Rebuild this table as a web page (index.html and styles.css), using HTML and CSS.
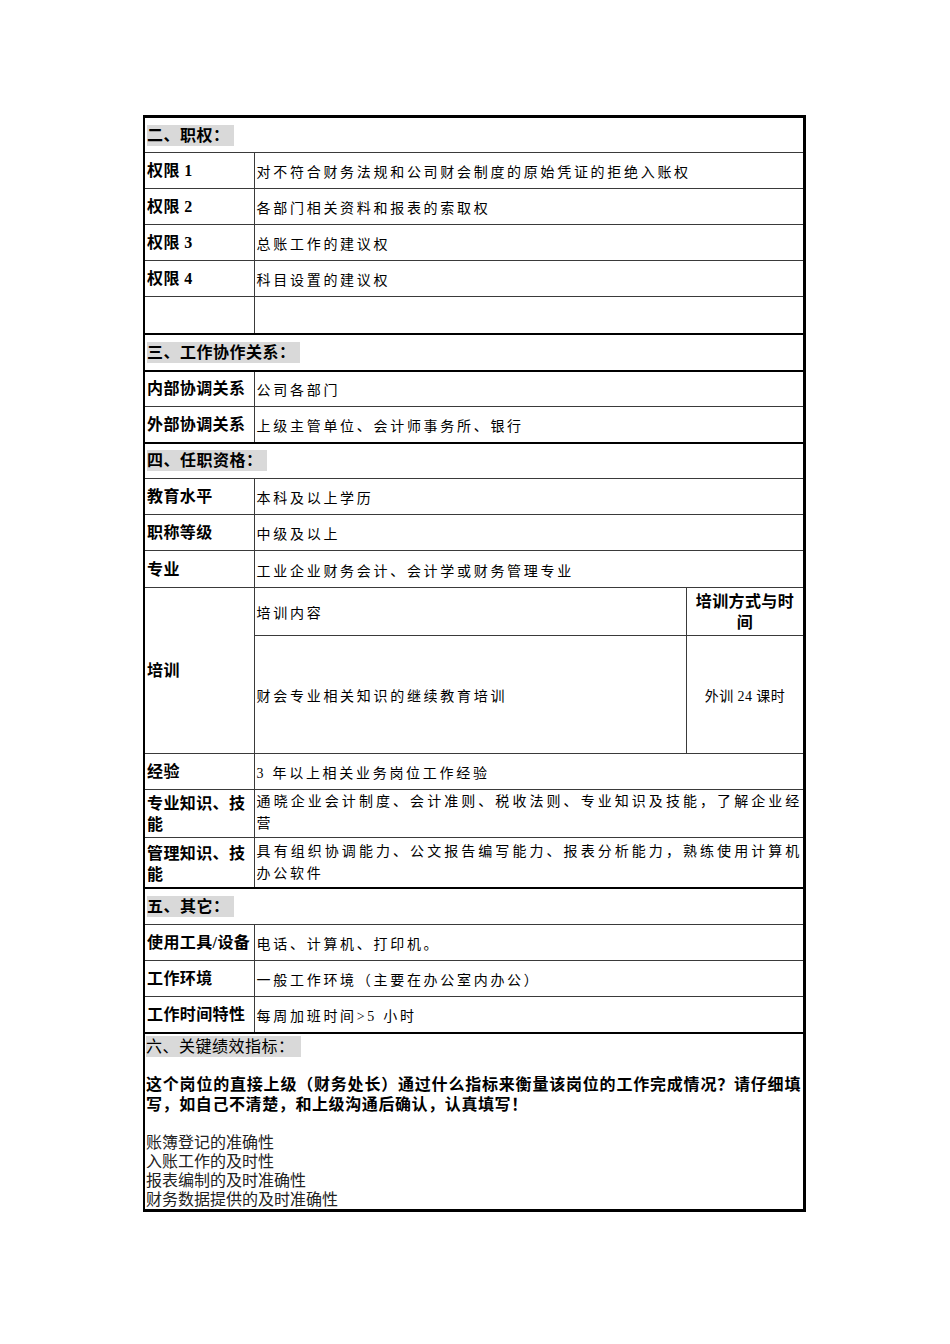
FILE: index.html
```html
<!DOCTYPE html>
<html lang="zh-CN">
<head>
<meta charset="utf-8">
<title>岗位说明书</title>
<link rel="stylesheet" href="styles.css">
</head>
<body>
<table class="sheet">
  <colgroup>
    <col class="c1">
    <col class="c2">
    <col class="c3">
  </colgroup>
  <tbody>
    <tr class="h36 sec"><td colspan="3" class="head"><span class="tag">二、职权：</span></td></tr>
    <tr class="h36"><td class="lab">权限 1</td><td colspan="2" class="val">对不符合财务法规和公司财会制度的原始凭证的拒绝入账权</td></tr>
    <tr class="h36"><td class="lab">权限 2</td><td colspan="2" class="val">各部门相关资料和报表的索取权</td></tr>
    <tr class="h36"><td class="lab">权限 3</td><td colspan="2" class="val">总账工作的建议权</td></tr>
    <tr class="h36"><td class="lab">权限 4</td><td colspan="2" class="val">科目设置的建议权</td></tr>
    <tr class="h37"><td class="lab"></td><td colspan="2" class="val"></td></tr>
    <tr class="h37 sec"><td colspan="3" class="head"><span class="tag">三、工作协作关系：</span></td></tr>
    <tr class="h36 sec"><td class="lab">内部协调关系</td><td colspan="2" class="val">公司各部门</td></tr>
    <tr class="h36"><td class="lab">外部协调关系</td><td colspan="2" class="val">上级主管单位、会计师事务所、银行</td></tr>
    <tr class="h36 sec"><td colspan="3" class="head"><span class="tag">四、任职资格：</span></td></tr>
    <tr class="h36"><td class="lab">教育水平</td><td colspan="2" class="val">本科及以上学历</td></tr>
    <tr class="h36"><td class="lab">职称等级</td><td colspan="2" class="val">中级及以上</td></tr>
    <tr class="h37"><td class="lab">专业</td><td colspan="2" class="val">工业企业财务会计、会计学或财务管理专业</td></tr>
    <tr class="h48"><td class="lab" rowspan="2">培训</td><td class="val">培训内容</td><td class="lab center">培训方式与时间</td></tr>
    <tr class="h118"><td class="val">财会专业相关知识的继续教育培训</td><td class="val center">外训 24 课时</td></tr>
    <tr class="h36"><td class="lab">经验</td><td colspan="2" class="val">3 年以上相关业务岗位工作经验</td></tr>
    <tr class="h48 two"><td class="lab">专业知识、技能</td><td colspan="2" class="val">通晓企业会计制度、会计准则、税收法则、专业知识及技能，了解企业经营</td></tr>
    <tr class="h50 two"><td class="lab">管理知识、技能</td><td colspan="2" class="val">具有组织协调能力、公文报告编写能力、报表分析能力，熟练使用计算机办公软件</td></tr>
    <tr class="h37 sec"><td colspan="3" class="head"><span class="tag">五、其它：</span></td></tr>
    <tr class="h36"><td class="lab">使用工具/设备</td><td colspan="2" class="val">电话、计算机、打印机。</td></tr>
    <tr class="h36"><td class="lab">工作环境</td><td colspan="2" class="val">一般工作环境（主要在办公室内办公）</td></tr>
    <tr class="h36"><td class="lab">工作时间特性</td><td colspan="2" class="val">每周加班时间&gt;5 小时</td></tr>
    <tr class="h176 sec last">
      <td colspan="3" class="kpi">
        <div class="kpi-head"><span class="tag light">六、关键绩效指标：</span></div>
        <p class="kpi-q">这个岗位的直接上级（财务处长）通过什么指标来衡量该岗位的工作完成情况？请仔细填写，如自己不清楚，和上级沟通后确认，认真填写！</p>
        <ul class="kpi-list">
          <li>账簿登记的准确性</li>
          <li>入账工作的及时性</li>
          <li>报表编制的及时准确性</li>
          <li>财务数据提供的及时准确性</li>
        </ul>
      </td>
    </tr>
  </tbody>
</table>
</body>
</html>
```

FILE: styles.css
```css
html, body {
  margin: 0;
  padding: 0;
  background: #ffffff;
}

body {
  padding: 115px 0 0 143px;
  color: #000;
  font-family: "Liberation Serif", "Noto Sans CJK SC", serif;
}

.sheet {
  width: 663px;
  table-layout: fixed;
  border-collapse: collapse;
  border: 3px solid #000;
  border-left-width: 2px;
}

.c1 { width: 110px; }
.c2 { width: 432px; }
.c3 { width: 118px; }

.sheet td {
  border: 1px solid #3a3a3a;
  padding: 0 2px;
  vertical-align: middle;
  overflow: hidden;
}

.sheet tr.sec > td {
  border-top: 2px solid #000;
}

.sheet tr.last > td {
  border-bottom: 3px solid #000;
}

.h36 { height: 36px; }
.h37 { height: 37px; }
.h48 { height: 48px; }
.h50 { height: 50px; }
.h118 { height: 118px; }
.h176 { height: 175px; }

.head {
  padding: 0 1px;
}

.tag {
  display: inline-block;
  background: #d9d9d9;
  font-family: "Liberation Sans", "Noto Sans CJK SC", sans-serif;
  font-weight: bold;
  font-size: 16px;
  line-height: 21px;
  padding-right: 4px;
  letter-spacing: 0.5px;
}

.tag.light {
  font-weight: normal;
  padding-right: 6px;
}

.sheet td.lab {
  font-family: "Liberation Serif", "Noto Sans CJK SC", sans-serif;
  font-weight: bold;
  font-size: 16px;
  line-height: 21px;
  letter-spacing: 0.4px;
  padding: 0 0 0 2px;
}

.sheet td.val {
  font-family: "Liberation Serif", "Noto Sans CJK SC", serif;
  font-size: 14px;
  line-height: 22px;
  letter-spacing: 2.7px;
  padding: 5px 1px 0 2px;
  text-align: justify;
}

.sheet td.center {
  text-align: center;
  letter-spacing: 0.4px;
  padding: 0 2px;
}

.sheet td.val.center {
  font-size: 14px;
  padding-top: 4px;
}

.sheet tr.two > td {
  vertical-align: bottom;
  padding-bottom: 2px;
  padding-top: 0;
}

.kpi {
  font-family: "Liberation Sans", "Noto Sans CJK SC", sans-serif;
  font-size: 16px;
}

.sheet td.kpi {
  vertical-align: top;
  padding: 2px 1px 0 1px;
}

.kpi-head {
  line-height: 20px;
}

.kpi-q {
  margin: 18px 0 0 0;
  font-weight: bold;
  line-height: 20px;
  letter-spacing: 0.6px;
  text-align: justify;
  padding-right: 1px;
}

.kpi-list {
  list-style: none;
  margin: 18px 0 0 0;
  padding: 0;
  line-height: 19px;
  color: #222;
}
```
